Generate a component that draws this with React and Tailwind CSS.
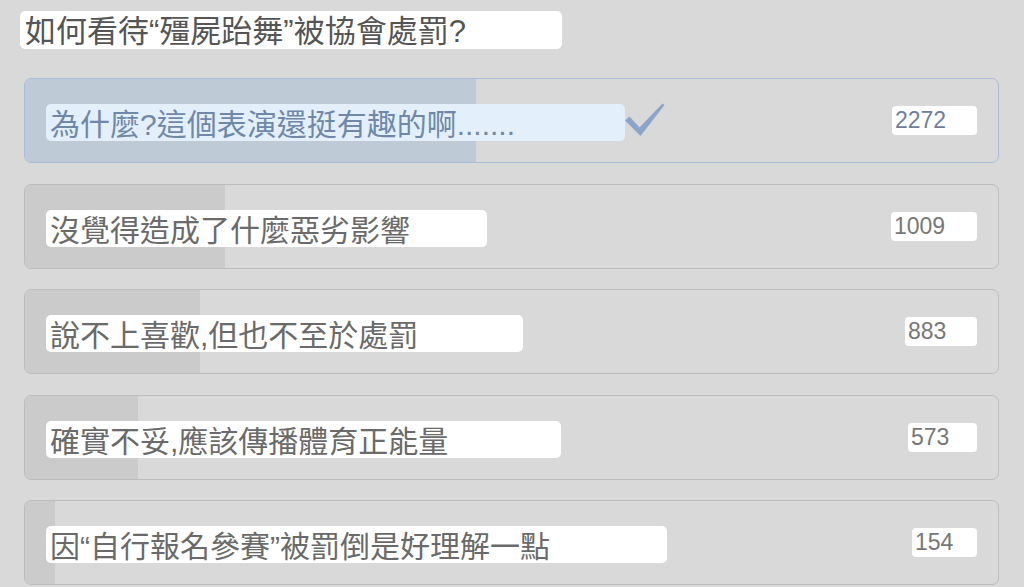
import React from "react";

const options = [
  { text: "為什麼?這個表演還挺有趣的啊.......", votes: 2272, labelW: 579, numW: 85, chosen: true },
  { text: "沒覺得造成了什麼惡劣影響", votes: 1009, labelW: 441, numW: 86 },
  { text: "說不上喜歡,但也不至於處罰", votes: 883, labelW: 477, numW: 72 },
  { text: "確實不妥,應該傳播體育正能量", votes: 573, labelW: 515, numW: 69 },
  { text: "因“自行報名參賽”被罰倒是好理解一點", votes: 154, labelW: 621, numW: 65 },
];

const total = options.reduce((s, o) => s + o.votes, 0);

// Latin punctuation from Liberation Sans, Han characters from Noto CJK
const cjk = { fontFamily: '"Liberation Sans", "Noto Sans CJK TC", sans-serif' };
const latin = { fontFamily: '"Liberation Sans", Arial, sans-serif' };

function Check() {
  return (
    <svg width="41" height="34" viewBox="0 0 41 34" className="shrink-0 -ml-[1px] mt-[-1px]">
      <path d="M1 17.5 L5.5 13.5 L15.5 24.5 L38.5 0.5 L40.5 2 L16.5 33 Z" fill="#8aa5cb" />
    </svg>
  );
}

function Option({ o }) {
  const pct = (o.votes / total) * 100;
  return (
    <div
      className={
        "relative h-[85px] rounded-[7px] border overflow-hidden " +
        (o.chosen ? "border-[#a9bdd7]" : "border-[#bcbcbc]")
      }
    >
      <div
        className={"absolute inset-y-0 left-0 " + (o.chosen ? "bg-[#bfcad7]" : "bg-[#cbcbcb]")}
        style={{ width: `calc(${pct}% - 1px)` }}
      />
      <div className="relative flex h-full items-center pl-[21px] pr-[21px]">
        <div
          className={
            "h-[37px] mt-[4px] rounded-[5px] overflow-hidden text-[30px] leading-[37px] pl-[4px] whitespace-nowrap " +
            (o.chosen ? "bg-[#e3f0fb] text-[#6f88a9]" : "bg-white text-[#6a6a6a]")
          }
          style={{ ...cjk, width: o.labelW }}
        >
          <div className="translate-y-[2px]">{o.text}</div>
        </div>
        {o.chosen && <Check />}
        <div className="flex-1" />
        <div
          className={
            "h-[29px] rounded-[4px] bg-white text-[23px] leading-[29px] pl-[3px] " +
            (o.chosen ? "text-[#6d809b]" : "text-[#777777]")
          }
          style={{ ...latin, width: o.numW }}
        >
          {o.votes}
        </div>
      </div>
    </div>
  );
}

export default function App() {
  return (
    <div className="w-[1024px] h-[587px] overflow-hidden bg-[#d9d9d9]">
      <div className="pt-[11px] pl-[20px]">
        <div
          className="w-[542px] h-[38px] rounded-[5px] bg-white overflow-hidden text-[31px] leading-[38px] pl-[5px] text-[#555555] whitespace-nowrap"
          style={cjk}
        >
          <div className="translate-y-[2px]">如何看待“殭屍跆舞”被協會處罰?</div>
        </div>
      </div>
      <div className="ml-[24px] mr-[25px] mt-[29px] flex flex-col gap-[20.5px]">
        {options.map((o) => (
          <Option key={o.votes} o={o} />
        ))}
      </div>
    </div>
  );
}
